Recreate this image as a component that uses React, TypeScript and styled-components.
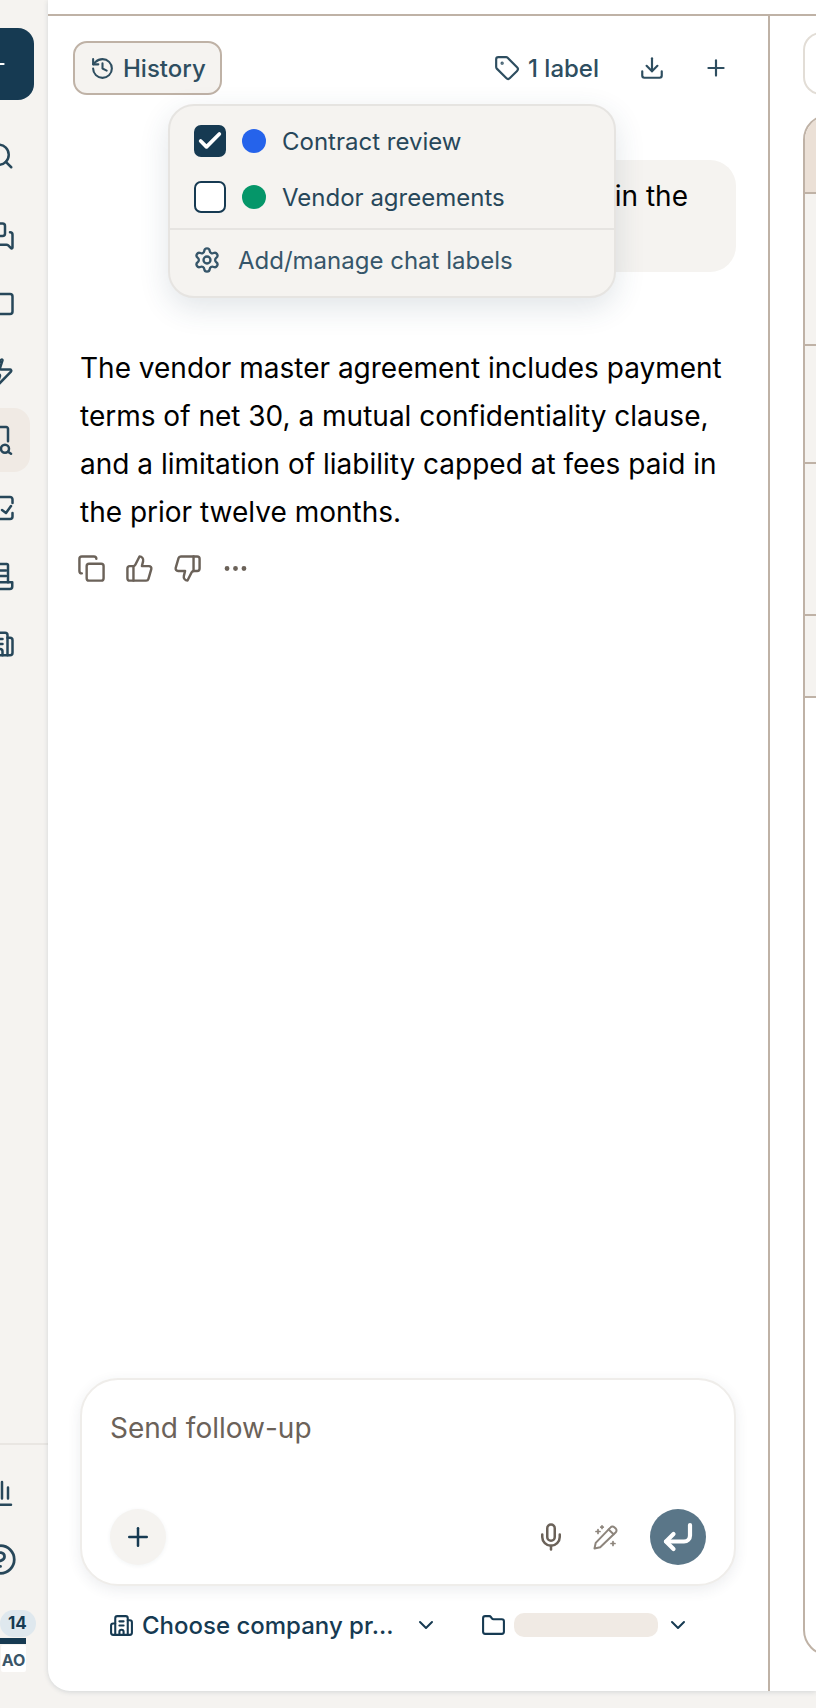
import { ReactNode } from "react";
import styled, { createGlobalStyle } from "styled-components";
import {
  Building2,
  Check,
  ChevronDown,
  CircleHelp,
  Copy,
  CornerDownLeft,
  Download,
  Ellipsis,
  Folder,
  History,
  MessagesSquare,
  Mic,
  Plus,
  Search,
  Settings,
  Tag,
  ThumbsDown,
  ThumbsUp,
  Zap,
} from "lucide-react";

const GlobalStyle = createGlobalStyle`
  html, body { margin: 0; padding: 0; background: #f5f3f0; overflow: hidden; }
  * { box-sizing: border-box; }
  body { font-family: Inter, "Liberation Sans", sans-serif; }
`;

const Page = styled.div`
  display: flex;
  width: 816px;
  height: 1708px;
  overflow: hidden;
  background: #f5f3f0;
`;

/* left rail, most of it is scrolled off the screen */
const Rail = styled.nav`
  flex: 0 0 48px;
  height: 100%;
  display: flex;
  flex-direction: column;
  overflow: hidden;
`;

const RailColumn = styled.div`
  width: 68px;
  margin-left: -34px;
  display: flex;
  flex-direction: column;
  align-items: center;
  color: #27475a;
`;

const NewButton = styled.div`
  width: 68px;
  height: 72px;
  margin-top: 28px;
  margin-bottom: 24px;
  padding-right: 8px;
  border-radius: 16px;
  background: #163a52;
  color: #fff;
  display: flex;
  align-items: center;
  justify-content: center;
`;

const RailItem = styled.div<{ $active?: boolean; $gap?: number }>`
  width: 60px;
  height: 64px;
  flex: none;
  margin-bottom: ${(p) => p.$gap ?? 4}px;
  display: flex;
  align-items: center;
  justify-content: center;
  border-radius: 16px;
  background: ${(p) => (p.$active ? "#f0eae4" : "transparent")};
`;

const RailBottom = styled.div`
  margin-top: auto;
  border-top: 2px solid #e9e6e2;
  padding: 16px 0 36px;
`;

const UserBlock = styled.div`
  padding-top: 17px;
  display: flex;
  flex-direction: column;
  align-self: stretch;
  margin-left: 34px;
`;

const CountBadge = styled.div`
  width: 36px;
  height: 27px;
  border-radius: 14px;
  background: #dfe8ee;
  color: #163a52;
  font-size: 17px;
  font-weight: 700;
  line-height: 27px;
  padding-left: 8px;
`;

const UserBar = styled.div`
  width: 26px;
  height: 6px;
  margin-top: 1px;
  background: #163a52;
`;

const Initials = styled.div`
  width: 25px;
  height: 27px;
  margin: 1px 0 0 1px;
  background: #fff;
  border-radius: 2px;
  color: #3a5568;
  font-size: 16px;
  font-weight: 700;
  line-height: 30px;
  text-align: center;
`;

const Main = styled.main`
  flex: 1;
  min-width: 0;
  height: 1691px;
  display: flex;
  flex-direction: column;
  background: #fff;
  border-bottom-left-radius: 22px;
  box-shadow: 0 1px 5px rgba(40, 60, 80, 0.16);
  overflow: hidden;
`;

const TopStrip = styled.div`
  flex: 0 0 16px;
  border-bottom: 2px solid #bfb2a6;
`;

const Panes = styled.div`
  flex: 1;
  min-height: 0;
  display: flex;
`;

const ChatPane = styled.section`
  position: relative;
  flex: 0 0 722px;
  border-right: 2px solid #bfb2a6;
  display: flex;
  flex-direction: column;
  padding: 25px 32px 0 32px;
`;

const Toolbar = styled.div`
  display: flex;
  align-items: center;
  height: 54px;
  margin-left: -7px;
`;

const HistoryButton = styled.button`
  display: flex;
  align-items: center;
  gap: 8px;
  width: 149px;
  height: 54px;
  padding: 0 0 0 15px;
  border: 2px solid #bfb2a6;
  border-radius: 14px;
  background: #f5f3f0;
  color: #2e4e60;
  font: 500 24px Inter, sans-serif;
`;

const ToolGroup = styled.div`
  margin-left: auto;
  display: flex;
  align-items: center;
  color: #2e4e60;
`;

const LabelButton = styled.div`
  display: flex;
  align-items: center;
  gap: 8px;
  font-size: 24px;
  font-weight: 500;
  margin-right: 40px;
`;

const ToolIcon = styled.div<{ $gap?: number }>`
  display: flex;
  margin-right: ${(p) => p.$gap ?? 0}px;
`;

const LabelMenu = styled.div`
  position: absolute;
  z-index: 3;
  top: 88px;
  left: 120px;
  width: 448px;
  height: 194px;
  background: #f5f3f0;
  border: 2px solid #e6e4e1;
  border-radius: 26px;
  box-shadow: 0 10px 30px rgba(40, 70, 95, 0.14);
  display: flex;
  flex-direction: column;
  padding-top: 7px;
`;

const MenuRow = styled.div`
  display: flex;
  align-items: center;
  height: 56px;
  padding-left: 24px;
  color: #27475a;
  font-size: 24px;
`;

const CheckBox = styled.div<{ $checked?: boolean }>`
  width: 32px;
  height: 32px;
  border-radius: 7px;
  border: 2px solid #163a52;
  background: ${(p) => (p.$checked ? "#163a52" : "#fff")};
  color: #fff;
  display: flex;
  align-items: center;
  justify-content: center;
`;

const Dot = styled.span<{ $color: string }>`
  width: 24px;
  height: 24px;
  margin: 0 16px;
  border-radius: 50%;
  background: ${(p) => p.$color};
`;

const MenuFooter = styled.div`
  margin-top: 3px;
  border-top: 2px solid #e6e4e1;
  height: 66px;
  display: flex;
  align-items: center;
  gap: 17px;
  padding: 0 0 4px 23px;
  color: #36566a;
  font-size: 24px;
`;

const Bubble = styled.div`
  align-self: flex-end;
  margin-top: 65px;
  height: 112px;
  padding: 12px 48px 0 24px;
  border-radius: 26px;
  background: #f5f3f0;
  color: #000;
  font-size: 28px;
  line-height: 48px;
  white-space: nowrap;
`;

const Reply = styled.p`
  margin: 72px 0 0;
  color: #000;
  font-size: 28px;
  line-height: 48px;
`;

const Actions = styled.div`
  display: flex;
  align-items: center;
  gap: 19px;
  margin: 18px 0 0 -3px;
  color: #6b6259;
`;

const Composer = styled.div`
  margin-top: auto;
  height: 208px;
  border: 2px solid #efedea;
  border-radius: 38px;
  background: #fff;
  box-shadow: 0 4px 14px rgba(40, 60, 80, 0.09);
  display: flex;
  flex-direction: column;
  padding: 0 28px 19px 28px;
`;

const Placeholder = styled.div`
  padding-top: 30px;
  color: #6b6259;
  font-size: 28px;
  line-height: 36px;
`;

const ComposerBar = styled.div`
  margin-top: auto;
  display: flex;
  align-items: center;
`;

const RoundButton = styled.button<{ $send?: boolean }>`
  width: 56px;
  height: 56px;
  padding: 0;
  border: none;
  border-radius: 50%;
  display: flex;
  align-items: center;
  justify-content: center;
  background: ${(p) => (p.$send ? "#5a7688" : "#f5f3f0")};
  color: ${(p) => (p.$send ? "#fff" : "#163a52")};
  box-shadow: ${(p) => (p.$send ? "none" : "0 1px 4px rgba(40, 60, 80, 0.06)")};
`;

const BarIcon = styled.div<{ $color: string; $gap: number; $first?: boolean }>`
  display: flex;
  color: ${(p) => p.$color};
  margin-right: ${(p) => p.$gap}px;
  margin-left: ${(p) => (p.$first ? "auto" : "0")};
`;

const ContextRow = styled.div`
  height: 105px;
  display: flex;
  align-items: center;
  padding: 0 0 27px 29px;
  color: #163a52;
`;

const ContextName = styled.span`
  margin-left: 8px;
  font-size: 24px;
  font-weight: 500;
  white-space: nowrap;
`;

const ContextIcon = styled.div<{ $left: number }>`
  display: flex;
  margin-left: ${(p) => p.$left}px;
`;

const Skeleton = styled.div`
  width: 144px;
  height: 24px;
  margin-left: 8px;
  border-radius: 10px;
  background: #f0eae4;
`;

/* right pane is cut off by the window, only its left edge shows */
const SidePane = styled.aside`
  flex: 1;
  min-width: 0;
  padding: 16px 0 0 33px;
`;

const SideField = styled.div`
  width: 200px;
  height: 63px;
  border: 2px solid #e2ddd6;
  border-radius: 18px;
`;

const SideTable = styled.div`
  width: 200px;
  height: 1542px;
  margin-top: 19px;
  border: 2px solid #bfb2a6;
  border-radius: 26px;
  overflow: hidden;
`;

const SideHead = styled.div`
  height: 78px;
  background: #ebe0d6;
  border-bottom: 2px solid #bfb2a6;
`;

const SideRow = styled.div<{ $height: number }>`
  height: ${(p) => p.$height}px;
  background: #f5f3f0;
  border-bottom: 2px solid #bfb2a6;
`;

type IconProps = { size: number };

const PencilSparkles = ({ size }: IconProps) => (
  <svg width={size} height={size} viewBox="0 0 26 26" fill="none" stroke="currentColor" strokeWidth="2" strokeLinejoin="round" strokeLinecap="round">
    <path d="M1.5 24.5l1.2-5.6L17.6 3.4a2.6 2.6 0 0 1 3.7-.2l1.4 1.3a2.6 2.6 0 0 1 .1 3.7L7.2 23.3z" />
    <path d="M15.6 5.5l5 4.7" />
    <path d="M3 7.5h4M5 5.5v4M9 1.8v2.6M7.7 3.1h2.6M20 17.5v4M18 19.5h4" strokeWidth="1.7" />
  </svg>
);

const RailGlyph = ({ size, children }: IconProps & { children: ReactNode }) => (
  <svg width={size} height={size} viewBox="0 0 24 24" fill="none" stroke="currentColor" strokeWidth="2" strokeLinecap="round" strokeLinejoin="round">
    {children}
  </svg>
);

const railIcons: { icon: ReactNode; active?: boolean; gap?: number }[] = [
  { icon: <Search size={30} />, gap: 16 },
  { icon: <MessagesSquare size={30} /> },
  {
    icon: (
      <RailGlyph size={30}>
        <rect x="0" y="4" width="22" height="16" rx="2" />
      </RailGlyph>
    ),
  },
  { icon: <Zap size={30} /> },
  {
    active: true,
    icon: (
      <RailGlyph size={30}>
        <path d="M6 1.6h11a1.4 1.4 0 0 1 1.4 1.4v10" />
        <circle cx="16" cy="19" r="3.2" />
        <path d="M18.4 21.4l2.4 1.6" />
      </RailGlyph>
    ),
  },
  {
    icon: (
      <RailGlyph size={30}>
        <path d="M8 3.2h12a2 2 0 0 1 2 2V8M22 16v2.8a2 2 0 0 1-2 2H8" />
        <path d="M13.6 13.6l3.2 2.4 4-5.6" />
      </RailGlyph>
    ),
  },
  {
    icon: (
      <RailGlyph size={30}>
        <path d="M4 17V3.4a1 1 0 0 1 1-1h12.4a1 1 0 0 1 1 1V17" />
        <path d="M9 7.5h7.8M9 12h7.8" />
        <path d="M0 17h21.8v3.4a2 2 0 0 1-2 2H0" />
      </RailGlyph>
    ),
  },
  { icon: <Building2 size={30} /> },
];

export default function App() {
  return (
    <Page>
      <GlobalStyle />
      <Rail>
        <RailColumn>
          <NewButton>
            <Plus size={26} />
          </NewButton>
          {railIcons.map((item, i) => (
            <RailItem key={i} $active={item.active} $gap={item.gap}>
              {item.icon}
            </RailItem>
          ))}
        </RailColumn>
        <RailBottom>
          <RailColumn>
            <RailItem $gap={2}>
              <RailGlyph size={30}>
                <path d="M6 21.4h14.8M13.6 16.4V3.2M18.4 16.4V7.6M8 16.4V9" />
              </RailGlyph>
            </RailItem>
            <RailItem $gap={2}>
              <CircleHelp size={33} />
            </RailItem>
            <UserBlock>
              <CountBadge>14</CountBadge>
              <UserBar />
              <Initials>AO</Initials>
            </UserBlock>
          </RailColumn>
        </RailBottom>
      </Rail>

      <Main>
        <TopStrip />
        <Panes>
          <ChatPane>
            <Toolbar>
              <HistoryButton>
                <History size={25} />
                History
              </HistoryButton>
              <ToolGroup>
                <LabelButton>
                  <Tag size={26} />1 label
                </LabelButton>
                <ToolIcon $gap={38}>
                  <Download size={26} />
                </ToolIcon>
                <ToolIcon $gap={7}>
                  <Plus size={26} />
                </ToolIcon>
              </ToolGroup>
            </Toolbar>

            <LabelMenu>
              <MenuRow>
                <CheckBox $checked>
                  <Check size={28} strokeWidth={3.2} />
                </CheckBox>
                <Dot $color="#2563eb" />
                Contract review
              </MenuRow>
              <MenuRow>
                <CheckBox />
                <Dot $color="#059669" />
                Vendor agreements
              </MenuRow>
              <MenuFooter>
                <Settings size={28} />
                Add/manage chat labels
              </MenuFooter>
            </LabelMenu>

            <Bubble>
              Summarize the key clauses in the
              <br />
              vendor master agreement.
            </Bubble>

            <Reply>
              The vendor master agreement includes payment terms of net 30, a mutual confidentiality clause, and a
              limitation of liability capped at fees paid in the prior twelve months.
            </Reply>
            <Actions>
              <Copy size={29} />
              <ThumbsUp size={29} />
              <ThumbsDown size={29} />
              <Ellipsis size={29} />
            </Actions>

            <Composer>
              <Placeholder>Send follow-up</Placeholder>
              <ComposerBar>
                <RoundButton>
                  <Plus size={30} />
                </RoundButton>
                <BarIcon $first $color="#6b6259" $gap={27}>
                  <Mic size={30} />
                </BarIcon>
                <BarIcon $color="#8d857c" $gap={31}>
                  <PencilSparkles size={26} />
                </BarIcon>
                <RoundButton $send>
                  <CornerDownLeft size={36} strokeWidth={2.8} />
                </RoundButton>
              </ComposerBar>
            </Composer>
            <ContextRow>
              <Building2 size={25} />
              <ContextName>Choose company pr...</ContextName>
              <ContextIcon $left={20}>
                <ChevronDown size={24} />
              </ContextIcon>
              <ContextIcon $left={43}>
                <Folder size={25} />
              </ContextIcon>
              <Skeleton />
              <ContextIcon $left={8}>
                <ChevronDown size={24} />
              </ContextIcon>
            </ContextRow>
          </ChatPane>

          <SidePane>
            <SideField />
            <SideTable>
              <SideHead />
              <SideRow $height={152} />
              <SideRow $height={118} />
              <SideRow $height={152} />
              <SideRow $height={82} />
            </SideTable>
          </SidePane>
        </Panes>
      </Main>
    </Page>
  );
}
